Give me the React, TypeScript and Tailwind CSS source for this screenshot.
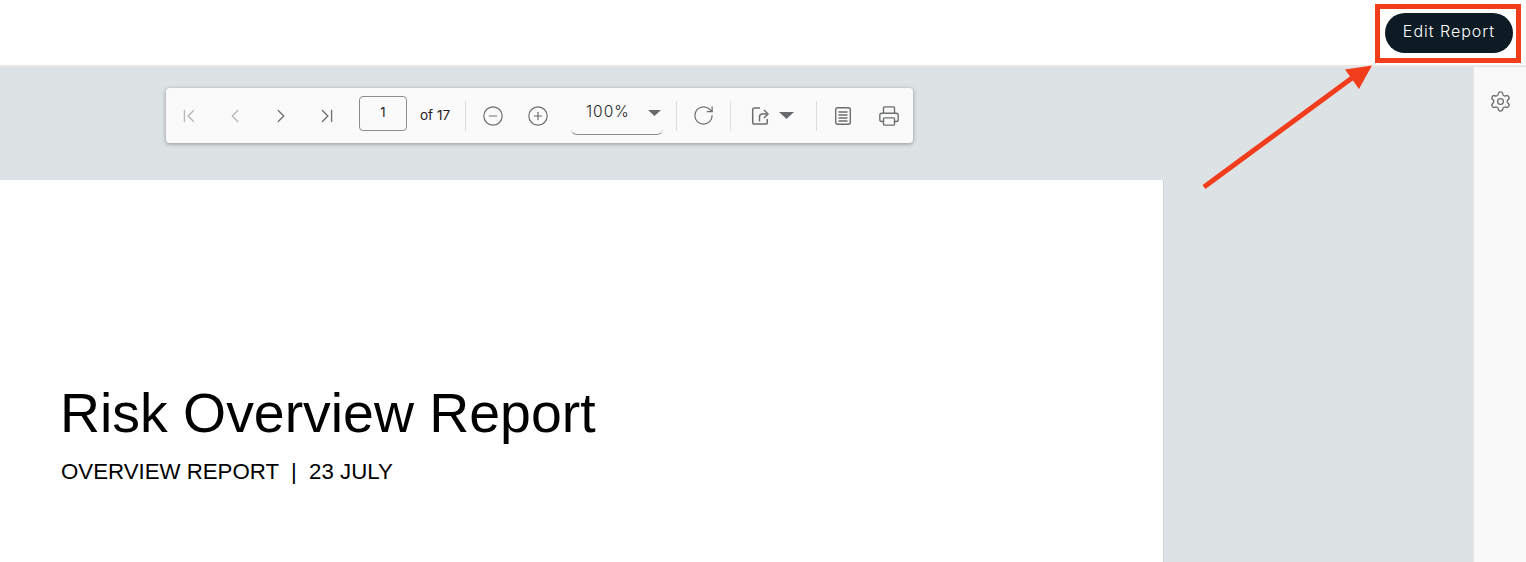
import { ChevronFirst, ChevronLast, ChevronLeft, ChevronRight, CircleMinus, CirclePlus, Printer, RotateCw, Settings } from 'lucide-react';
import type { ReactNode } from 'react';

const inter = 'font-["Inter",sans-serif]';

function ToolButton({ children, width = 'w-[46px]' }: { children: ReactNode; width?: string }) {
  return <button className={`${width} h-8 flex items-center justify-center text-[#6b6e70] shrink-0`}>{children}</button>;
}

function Divider() {
  return <div className="w-px h-[30px] bg-[#dcdcdc] shrink-0" />;
}

function Caret({ width = 14, height = 7 }: { width?: number; height?: number }) {
  return (
    <svg width={width} height={height} viewBox="0 0 14 7" preserveAspectRatio="none" className="shrink-0">
      <path d="M0 0h14L7 7z" fill="#666a6c" />
    </svg>
  );
}

function Toolbar() {
  return (
    <div className={`ml-[166px] mt-[21px] w-[747px] h-[55px] bg-[#fafafa] rounded shadow-[0_1px_4px_rgba(0,0,0,0.35)] flex items-center ${inter}`}>
      <ToolButton><ChevronFirst size={22} strokeWidth={1.4} className="text-[#b4b6b8]" /></ToolButton>
      <ToolButton><ChevronLeft size={22} strokeWidth={1.4} className="text-[#b4b6b8]" /></ToolButton>
      <ToolButton><ChevronRight size={22} strokeWidth={1.4} /></ToolButton>
      <ToolButton><ChevronLast size={22} strokeWidth={1.4} /></ToolButton>
      <div className="ml-[9px] mb-1 w-12 h-[35px] border border-[#8a8c8e] rounded flex justify-center pt-[7px] text-[13px] leading-4 text-[#222] shrink-0">1</div>
      <span className="ml-[13px] w-[32px] text-[13.5px] text-[#222] shrink-0">of 17</span>
      <div className="ml-[13px]"><Divider /></div>
      <ToolButton width="w-[53px]"><CircleMinus size={22} strokeWidth={1.3} /></ToolButton>
      <ToolButton width="w-[38px]"><CirclePlus size={22} strokeWidth={1.3} /></ToolButton>
      <div className="ml-[14px] w-[92px] h-[38px] border-b border-[#8a8c8e] rounded-b-md flex items-start justify-between pl-[15px] pr-[2px] pt-[6px] shrink-0">
        <span className="text-[15.5px] leading-[18px] tracking-[1px] font-light text-[#222]">100%</span>
        <div className="mt-[7px]"><Caret width={13} height={6} /></div>
      </div>
      <div className="ml-[13px]"><Divider /></div>
      <ToolButton width="w-[53px]"><RotateCw size={23} strokeWidth={1.3} /></ToolButton>
      <Divider />
      <div className="w-[85px] flex items-center pl-[20px] gap-[10px] text-[#6b6e70] shrink-0">
        <svg width="18" height="18" viewBox="0 0 18 18" fill="none" stroke="currentColor" strokeWidth="1.5">
          <path d="M9 1H3.5a1.8 1.8 0 0 0-1.8 1.8V15.2a1.8 1.8 0 0 0 1.8 1.8H14.5a1.8 1.8 0 0 0 1.8-1.8V12" />
          <path d="M8.5 14.5V10a3 3 0 0 1 3-3H17" />
          <path d="M13 3 17 7 13 11" />
        </svg>
        <Caret width={15} height={7} />
      </div>
      <Divider />
      <ToolButton width="w-[52px]">
        <svg width="16" height="18" viewBox="0 0 16 18" fill="none" stroke="currentColor" strokeWidth="1.4">
          <rect x="0.7" y="0.7" width="14.6" height="16.6" rx="2" />
          <path d="M3.5 5h9M3.5 8h9M3.5 11h9M3.5 14h9" />
        </svg>
      </ToolButton>
      <ToolButton width="w-[40px]"><Printer size={22} strokeWidth={1.5} /></ToolButton>
    </div>
  );
}

export default function App() {
  return (
    <div className="relative w-[1526px] h-[562px] overflow-hidden bg-white">
      <header className="h-[67px] bg-white border-b-2 border-[#e8e8e8] flex items-start justify-end pt-[13px] pr-[13px]">
        <button className={`w-[128px] h-10 pb-1 rounded-full bg-[#0c1b24] text-white text-[16px] font-[350] tracking-[1px] ${inter}`}>Edit Report</button>
      </header>
      <div className="flex h-[495px]">
        <main className="flex-1 bg-[#dde2e5] flex flex-col">
          <div className="h-[113px] shrink-0"><Toolbar /></div>
          <div className="w-[1164px] flex-1 bg-white border-r border-[#d0d3d6] pl-[60px] pt-[199px] font-['Liberation_Sans',sans-serif] text-black">
            <h1 className="text-[55.4px] leading-[68px]">Risk Overview Report</h1>
            <p className="mt-[12px] ml-px text-[22.25px] leading-[26px] whitespace-pre">OVERVIEW REPORT  |  23 JULY</p>
          </div>
        </main>
        <aside className="w-[53px] bg-[#f9f9f9] border-l border-[#e4e4e4] flex justify-center pt-[23px]">
          <Settings size={23} strokeWidth={1.4} className="text-[#6b6e70]" />
        </aside>
      </div>

      {/* Red annotation over the screenshot */}
      <div className="absolute left-[1375px] top-[4px] w-[146px] h-[59px] border-[5px] border-[#f23d1d]" />
      <svg className="absolute left-0 top-0 pointer-events-none" width="1526" height="562" viewBox="0 0 1526 562">
        <path d="M1204 187 1352 78" stroke="#f23d1d" strokeWidth="5" />
        <path d="M1372 65.5 1345 69.5 1359 89z" fill="#f23d1d" />
      </svg>
    </div>
  );
}
